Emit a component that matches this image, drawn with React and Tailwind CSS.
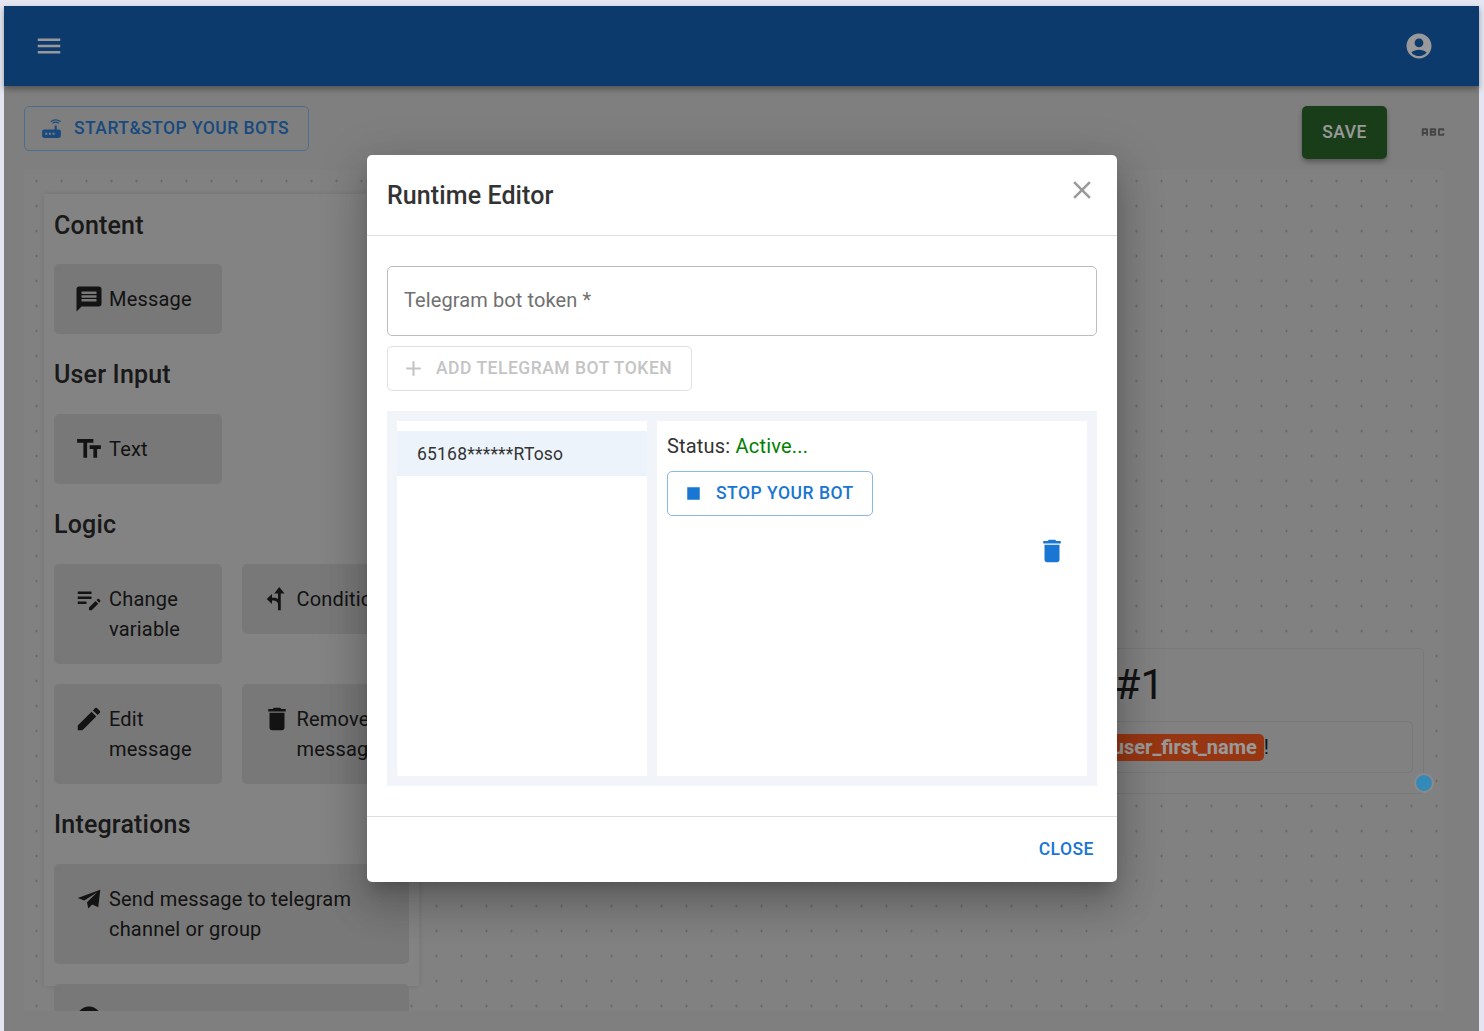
import React from 'react';

const icons = {
  menu: 'M3 18h18v-2H3v2zm0-5h18v-2H3v2zm0-7v2h18V6H3z',
  account: 'M12 2C6.48 2 2 6.48 2 12s4.48 10 10 10 10-4.48 10-10S17.52 2 12 2zm0 4c1.93 0 3.5 1.57 3.5 3.5S13.93 13 12 13s-3.5-1.57-3.5-3.5S10.07 6 12 6zm0 14c-2.03 0-4.43-.82-6.14-2.88C7.55 15.8 9.68 15 12 15s4.45.8 6.14 2.12C16.43 19.18 14.03 20 12 20z',
  router: 'M20.2 5.9l.8-.8C19.6 3.7 17.8 3 16 3s-3.6.7-5 2.1l.8.8C13 4.8 14.5 4.2 16 4.2s3 .6 4.2 1.7zm-.9.8c-.9-.9-2.1-1.4-3.3-1.4s-2.4.5-3.3 1.4l.8.8c.7-.7 1.6-1 2.5-1 .9 0 1.8.3 2.5 1l.8-.8zM19 13h-2V9h-2v4H5c-1.1 0-2 .9-2 2v4c0 1.1.9 2 2 2h14c1.1 0 2-.9 2-2v-4c0-1.1-.9-2-2-2zM8 18H6v-2h2v2zm3.5 0h-2v-2h2v2zm3.5 0h-2v-2h2v2z',
  abc: 'M21 11h-1.5v-.5h-2v3h2V13H21v1c0 .55-.45 1-1 1h-3c-.55 0-1-.45-1-1v-4c0-.55.45-1 1-1h3c.55 0 1 .45 1 1v1zM8 10v5H6.5v-1.5h-2V15H3v-5c0-.55.45-1 1-1h3c.55 0 1 .45 1 1zm-1.5.5h-2V12h2v-1.5zm7 1.5c.55 0 1 .45 1 1v1c0 .55-.45 1-1 1h-4V9h4c.55 0 1 .45 1 1v1c0 .55-.45 1-1 1zM11 10.5v.75h2v-.75h-2zm2 2.25h-2v.75h2v-.75z',
  message: 'M20 2H4c-1.1 0-1.99.9-1.99 2L2 22l4-4h14c1.1 0 2-.9 2-2V4c0-1.1-.9-2-2-2zm-2 12H6v-2h12v2zm0-3H6V9h12v2zm0-3H6V6h12v2z',
  text: 'M2.5 4v3h5v12h3V7h5V4h-13zm19 5h-9v3h3v7h3v-7h3V9z',
  editNote: 'M3 10h11v2H3zm0-2h11V6H3zm0 8h7v-2H3zm15.01-3.13.71-.71c.39-.39 1.02-.39 1.41 0l.71.71c.39.39.39 1.02 0 1.41l-.71.71zm-.71.71-5.3 5.3V21h2.12l5.3-5.3z',
  edit: 'M3 17.25V21h3.75L17.81 9.94l-3.75-3.75L3 17.25zM20.71 7.04c.39-.39.39-1.02 0-1.41l-2.34-2.34a.9959.9959 0 0 0-1.41 0l-1.83 1.83 3.75 3.75 1.83-1.83z',
  trash: 'M6 19c0 1.1.9 2 2 2h8c1.1 0 2-.9 2-2V7H6v12zM19 4h-3.5l-1-1h-5l-1 1H5v2h14V4z',
  split: 'M13.8 2.4 18 7.5h-3V21h-2.2v-5.5c-.6-1.3-1.6-2-3-2.3H8V16L3.8 12 8 8v3h1.6c1.2 0 2.3.4 3.2 1.1V7.5h-3z',
  send: 'M21 4.6 19.4 18.6 14.6 16.4 11.4 19.6 10.4 14.6 18.6 6.6 8.2 13.2 3 11.2z',
  add: 'M19 13h-6v6h-2v-6H5v-2h6V5h2v6h6v2z',
  stop: 'M6 6h12v12H6z',
  close: 'M19 6.41 17.59 5 12 10.59 6.41 5 5 6.41 10.59 12 5 17.59 6.41 19 12 13.41 17.59 19 19 17.59 13.41 12z',
};

const Icon = ({ name, className = 'w-[30px] h-[30px]' }) => (
  <svg viewBox="0 0 24 24" fill="currentColor" className={`shrink-0 ${className}`}>
    <path d={icons[name]} />
  </svg>
);

const BlockCard = ({ icon, className = 'w-[168px] h-[70px]', children }) => (
  <div className={`flex gap-[5px] rounded-[5px] bg-[#c8c8c8] pl-5 pt-5 text-[20px] leading-[30px] tracking-[0.19px] text-[#212121] ${className}`}>
    <Icon name={icon} />
    <div>{children}</div>
  </div>
);

const SectionTitle = ({ children }) => (
  <h2 className="text-[25px] font-medium leading-[30px] tracking-[0.19px] text-[#2a2a2a]">{children}</h2>
);

const Sidebar = () => (
  <div className="absolute left-5 top-6 w-[375px] h-[792px] bg-[#dadada] px-[10px] pt-[17px] shadow-[0_0_6px_rgba(0,0,0,0.12)]">
    <SectionTitle>Content</SectionTitle>
    <div className="mt-[23px] flex gap-5">
      <BlockCard icon="message">Message</BlockCard>
    </div>
    <div className="mt-[26px]"><SectionTitle>User Input</SectionTitle></div>
    <div className="mt-[24px] flex gap-5">
      <BlockCard icon="text">Text</BlockCard>
    </div>
    <div className="mt-[26px]"><SectionTitle>Logic</SectionTitle></div>
    <div className="mt-[24px] flex gap-5 items-start">
      <BlockCard icon="editNote" className="w-[168px] h-[100px]">Change<br />variable</BlockCard>
      <BlockCard icon="split">Condition</BlockCard>
    </div>
    <div className="mt-5 flex gap-5 items-start">
      <BlockCard icon="edit" className="w-[168px] h-[100px]">Edit<br />message</BlockCard>
      <BlockCard icon="trash" className="w-[168px] h-[100px]">Remove<br />message</BlockCard>
    </div>
    <div className="mt-[26px]"><SectionTitle>Integrations</SectionTitle></div>
    <div className="mt-[24px]">
      <BlockCard icon="send" className="w-[355px] h-[100px]">Send message to telegram<br />channel or group</BlockCard>
    </div>
    <div className="mt-5">
      <BlockCard icon="account" className="w-[355px] h-[100px]" />
    </div>
  </div>
);

const NodeCard = () => (
  <div className="absolute left-[820px] top-[478px] w-[580px] h-[146px] rounded-[5px] border border-[#c8c8c8] bg-[#d8d8d8]">
    <div className="absolute right-[259px] top-[9px] whitespace-nowrap text-[42px] font-normal leading-[54px] text-[#212121]">Message #1</div>
    <div className="absolute left-[10px] right-[10px] top-[72px] h-[52px] rounded-[5px] border border-[#c8c8c8] flex items-center justify-end pr-[143px] text-[20px] text-[#212121]">
      <span className="rounded-[5px] bg-[#fa5a20] h-[27px] px-[7px] leading-[27px] font-bold text-white">user_first_name</span>!
    </div>
    <div className="absolute right-[-9px] bottom-[2px] z-20 w-4 h-4 rounded-full bg-[#338ab8] outline-2 outline-[#8a8a8a]" />
  </div>
);

const Modal = () => (
  <div className="absolute z-30 left-[363px] top-[149px] w-[750px] h-[727px] rounded-[5px] bg-white flex flex-col shadow-[0_11px_15px_-7px_rgba(0,0,0,0.2),0_24px_38px_3px_rgba(0,0,0,0.14),0_9px_46px_8px_rgba(0,0,0,0.12)]">
    <div className="h-[81px] border-b border-[#e0e0e0] px-5 flex items-center justify-between">
      <h2 className="pt-[2px] text-[25px] font-medium tracking-[0.1px] text-[#333333]">Runtime Editor</h2>
      <Icon name="close" className="w-[30px] h-[30px] text-[#999999] mb-[10px]" />
    </div>
    <div className="flex-1 px-5 pt-[30px]">
      <div className="h-[70px] rounded-[5px] border border-[#bdbdbd] flex items-center px-[16px] pb-[2px] text-[20px] tracking-[0.1px] text-[#707070]">
        Telegram bot token *
      </div>
      <button className="mt-[10px] h-[45px] w-[305px] flex items-center gap-[10px] rounded-[5px] border border-[#e0e0e0] pl-[13px] text-[17.5px] font-medium tracking-[0.5px] text-[#c4c4c4]">
        <Icon name="add" className="w-[25px] h-[25px]" />
        ADD TELEGRAM BOT TOKEN
      </button>
      <div className="mt-5 h-[375px] bg-[#f1f5f9] p-[10px] flex gap-[10px]">
        <div className="w-[250px] bg-white pt-[10px]">
          <div className="h-[45px] bg-[#edf3fa] pl-5 pt-[2px] flex items-center text-[17.5px] tracking-[0.2px] text-[#333333]">65168******RToso</div>
        </div>
        <div className="flex-1 bg-white px-[10px] pt-[10px] relative">
          <div className="text-[20px] leading-[30px] tracking-[0.19px] text-[#333333]">Status: <span className="text-[#008000]">Active...</span></div>
          <button className="mt-[10px] h-[45px] w-[206px] flex items-center gap-[10px] rounded-[5px] border border-[#8ab8e8] pl-[13px] text-[17.5px] font-medium tracking-[0.5px] text-[#1976d2]">
            <Icon name="stop" className="w-[25px] h-[25px]" />
            STOP YOUR BOT
          </button>
          <Icon name="trash" className="absolute left-[380px] top-[115px] w-[30px] h-[30px] text-[#1976d2]" />
        </div>
      </div>
    </div>
    <div className="h-[66px] border-t border-[#e0e0e0] flex items-center justify-end pr-[23px] text-[17.5px] font-medium tracking-[0.5px] text-[#1976d2]">CLOSE</div>
  </div>
);

export default function App() {
  return (
    <div className="w-[1484px] h-[1031px] overflow-hidden bg-[#e3e6f1] pt-[6px] pl-[4px] pr-[5px] font-['Roboto',sans-serif]">
      <div className="relative h-[1025px] bg-[#d4d4d4]">
        {/* app bar */}
        <div className="relative h-[80px] bg-[#1462b6] flex items-center justify-between pl-[30px] pr-[45px] shadow-[0_3px_6px_rgba(0,0,0,0.35)]">
          <Icon name="menu" className="w-[30px] h-[30px] text-white" />
          <Icon name="account" className="w-[30px] h-[30px] text-white" />
        </div>

        {/* toolbar */}
        <div className="flex items-start justify-between pl-5 pt-5 pr-[31px]">
          <button className="h-[45px] w-[285px] flex items-center gap-[10px] rounded-[5px] border border-[#7fb8f0] pl-[14px] text-[17.5px] font-medium tracking-[0.45px] text-[#2a7bd0]">
            <Icon name="router" className="w-[25px] h-[25px]" />
            START&amp;STOP YOUR BOTS
          </button>
          <div className="flex items-center gap-[31px]">
            <button className="h-[53px] w-[85px] rounded-[5px] bg-[#2b672b] text-[17.5px] font-medium tracking-[0.5px] text-white shadow-[0_3px_5px_rgba(0,0,0,0.3)]">SAVE</button>
            <Icon name="abc" className="w-[30px] h-[30px] -mt-[1px] text-[#747474]" />
          </div>
        </div>

        {/* canvas */}
        <div className="absolute left-5 top-[164px] w-[1420px] h-[841px] overflow-hidden bg-[#d8d8d8] bg-[radial-gradient(circle,#a6a6a6_0.9px,transparent_1.3px)] bg-[size:25px_25px] bg-[position:0px_-1.5px]">
          <Sidebar />
          <NodeCard />
        </div>

        {/* backdrop */}
        <div className="absolute inset-0 z-10 bg-black/40" />
        <Modal />
      </div>
    </div>
  );
}
